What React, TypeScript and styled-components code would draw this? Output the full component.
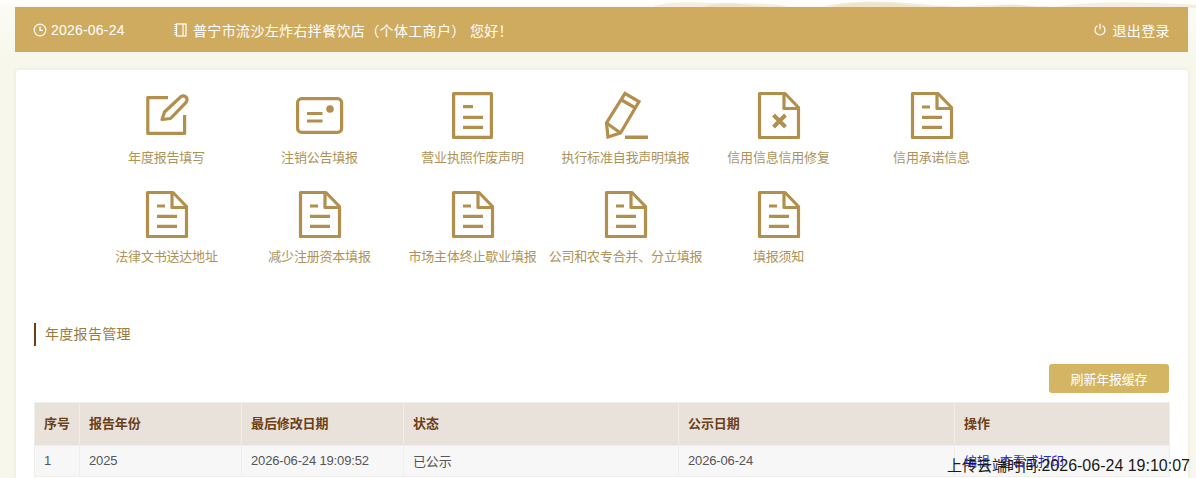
import React from "react";
import styled, { createGlobalStyle } from "styled-components";

const Global = createGlobalStyle`
  html, body { margin: 0; padding: 0; height: 100%; overflow: hidden; }
  body {
    background: linear-gradient(180deg, #ffffff 0, #fbfbf4 8px, #f8f7ec 60px);
    font-family: "Liberation Sans", "Noto Sans CJK SC", sans-serif;
  }
`;

const Page = styled.div`
  position: relative;
  width: 1196px;
  height: 478px;
  overflow: hidden;
  padding: 7px 0 0 15px;
  box-sizing: border-box;
`;

const Decor = styled.svg`
  position: absolute;
  left: 650px;
  top: 0;
  width: 546px;
  height: 8px;
`;

const TopBar = styled.header`
  position: relative;
  display: flex;
  align-items: center;
  height: 45px;
  width: 1173px;
  background: #cfab60;
  color: #fff;
  font-size: 14px;
  padding: 0 18px;
  box-sizing: border-box;
`;

const BarItem = styled.span<{ $w?: number; $right?: boolean; $track?: number; $gap?: number }>`
  display: inline-flex;
  align-items: center;
  gap: ${(p) => p.$gap ?? 5}px;
  letter-spacing: ${(p) => p.$track ?? 0}px;
  width: ${(p) => (p.$w ? `${p.$w}px` : "auto")};
  margin-left: ${(p) => (p.$right ? "auto" : 0)};
`;

const Card = styled.main`
  width: 1172px;
  height: 420px;
  margin: 18px 0 0 1px;
  background: #fff;
  border-radius: 3px;
  box-shadow: 0 0 4px rgba(120, 110, 70, 0.12);
  box-sizing: border-box;
  padding: 0 19px 0 18px;
`;

const Grid = styled.nav`
  display: grid;
  grid-template-columns: repeat(6, 153px);
  grid-auto-rows: 99px;
  height: 198px;
  padding: 21px 0 0 56px;
`;

const Tile = styled.a`
  display: flex;
  flex-direction: column;
  align-items: center;
  color: #ae9358;
  font-size: 13px;
  line-height: 18px;
  letter-spacing: -0.2px;
  white-space: nowrap;
  svg { display: block; width: 48px; height: 48px; margin-bottom: 10px; }
`;

const SectionTitle = styled.h2`
  margin: 34px 0 0;
  height: 23px;
  line-height: 23px;
  border-left: 2px solid #6b3f10;
  padding-left: 9px;
  font-size: 14px;
  letter-spacing: 0.3px;
  font-weight: normal;
  color: #9a7b3f;
`;

const Tools = styled.div`
  display: flex;
  justify-content: flex-end;
  margin-top: 18px;
`;

const RefreshBtn = styled.button`
  width: 120px;
  height: 29px;
  border: 0;
  border-radius: 3px;
  background: #d3b564;
  color: #fff;
  font: 13px "Liberation Sans", "Noto Sans CJK SC", sans-serif;
  letter-spacing: -0.2px;
`;

const Table = styled.table`
  width: 1135px;
  margin-top: 9px;
  border-collapse: collapse;
  table-layout: fixed;
  font-size: 13px;
  th, td { border: 1px solid #f0eeea; text-align: left; box-sizing: border-box; }
  th { background: #e9e2db; color: #6b4016; height: 43px; font-weight: bold; padding: 0 8px 3px 9px; letter-spacing: -0.1px; }
  td { background: #f7f7f7; color: #555; height: 31px; padding: 0 8px 2px 9px; letter-spacing: -0.15px; }
`;

const ActionLink = styled.a`
  color: #2a2acc;
  margin-right: 10px;
`;

const Stamp = styled.div`
  position: absolute;
  right: 6px;
  bottom: 3px;
  font-size: 16px;
  line-height: 18px;
  color: #1a1a1a;
  white-space: nowrap;
`;

const StampLabel = styled.span`
  font-size: 15px;
`;

const C = "#b28f4c";
const Doc = ({ children }: { children?: React.ReactNode }) => (
  <svg viewBox="0 0 48 48" fill="none" stroke={C} strokeWidth="3.2" strokeLinejoin="round">
    <path d="M4.500 2.500H30l13.500 14V46.500H4.500z" />
    <path d="M29 2.500v15h14.500" />
    {children}
  </svg>
);

const IconEdit = () => (
  <svg viewBox="0 0 48 48" fill="none" stroke={C} strokeWidth="3.2" strokeLinecap="round" strokeLinejoin="round">
    <path d="M25 6.600H4.800V42.400H41.600V24" strokeLinecap="butt" />
    <path d="M19 28.500l2.500-7.500L37 6.500c2-2 4.500-2 6-.5s1.500 4-.5 6L27.500 27.500z" />
  </svg>
);
const IconCard = () => (
  <svg viewBox="0 0 48 48" fill="none" stroke={C} strokeWidth="3.2">
    <rect x="1.600" y="7.600" width="44" height="33.800" rx="4" />
    <path d="M11 22.500h15.500M11 30h15.500" />
    <circle cx="34" cy="18" r="2.200" fill={C} stroke={C} />
  </svg>
);
const IconPaper = () => (
  <svg viewBox="0 0 48 48" fill="none" stroke={C} strokeWidth="3.2" strokeLinejoin="round">
    <rect x="4.600" y="2.600" width="37.800" height="43.800" />
    <path d="M14 15.700h10M14 26.300h20M14 36.300h20" />
  </svg>
);
const IconPencil = () => (
  <svg viewBox="0 0 48 48" fill="none" stroke={C} strokeWidth="3.2" strokeLinejoin="miter">
    <path d="M23 2.500L37 10.500 18.500 42 6 46 4.500 32z" />
    <path d="M4.500 32L18.500 42M19.500 9l14 8" />
    <path d="M23 46.300h23" strokeWidth="3.600" />
  </svg>
);
const IconDocX = () => (
  <Doc>
    <path d="M18.500 24l12 12M30.500 24l-12 12" strokeWidth="4" />
  </Doc>
);
const IconDocLines = () => (
  <Doc>
    <path d="M14 16h8M14 26.300h20M14 36.300h20" />
  </Doc>
);

const tiles = [
  { t: "年度报告填写", i: <IconEdit /> },
  { t: "注销公告填报", i: <IconCard /> },
  { t: "营业执照作废声明", i: <IconPaper /> },
  { t: "执行标准自我声明填报", i: <IconPencil /> },
  { t: "信用信息信用修复", i: <IconDocX /> },
  { t: "信用承诺信息", i: <IconDocLines /> },
  { t: "法律文书送达地址", i: <IconDocLines /> },
  { t: "减少注册资本填报", i: <IconDocLines /> },
  { t: "市场主体终止歇业填报", i: <IconDocLines /> },
  { t: "公司和农专合并、分立填报", i: <IconDocLines /> },
  { t: "填报须知", i: <IconDocLines /> },
];

export default function App() {
  return (
    <Page>
      <Global />
      <Decor viewBox="0 0 546 8" aria-hidden="true">
        <g fill="#f5eeDf">
          <path d="M0 8C10 3 30 1 60 3s60-2 85 5Z" />
          <path d="M170 8c20-8 70-8 110-3s60-5 110 3Z" />
          <path d="M400 8c30-6 80-7 146-3v3Z" />
        </g>
        <g fill="#efe3c9">
          <path d="M50 8c12-5 30-6 50-3s30 0 40 3Z" />
          <path d="M180 8c15-6 50-7 80-3s30-1 45 3Z" />
          <path d="M340 8c10-4 25-4 40-2s15-1 22 2Z" />
        </g>
      </Decor>
      <TopBar>
        <BarItem $w={141} $track={0.2} $gap={4}>
          <svg width="14" height="14" viewBox="0 0 14 14" fill="none" stroke="#fff" strokeWidth="1.200">
            <circle cx="7" cy="7" r="5.800" />
            <path d="M7 3.500V7.300H10" />
          </svg>
          2026-06-24
        </BarItem>
        <BarItem $track={0.35} $gap={6}>
          <svg width="13" height="14" viewBox="0 0 13 14" fill="none" stroke="#fff" strokeWidth="1.200">
            <rect x="2.500" y="1" width="9.500" height="12" />
            <path d="M9 1v12" />
            <path d="M1.200 1v12" strokeWidth="1.600" strokeDasharray="1 1" />
          </svg>
          普宁市流沙左炸右拌餐饮店（个体工商户） 您好！
        </BarItem>
        <BarItem $right $track={0.4}>
          <svg width="14" height="14" viewBox="0 0 14 14" fill="none" stroke="#fff" strokeWidth="1.200" strokeLinecap="round">
            <path d="M7 1v5M4 3a5 5 0 1 0 6 0" />
          </svg>
          退出登录
        </BarItem>
      </TopBar>
      <Card>
        <Grid>
          {tiles.map((r) => (
            <Tile key={r.t}>
              {r.i}
              {r.t}
            </Tile>
          ))}
        </Grid>
        <SectionTitle>年度报告管理</SectionTitle>
        <Tools>
          <RefreshBtn>刷新年报缓存</RefreshBtn>
        </Tools>
        <Table>
          <colgroup>
            <col width="45" />
            <col width="162" />
            <col width="162" />
            <col width="275" />
            <col width="276" />
            <col width="215" />
          </colgroup>
          <thead>
            <tr>
              <th>序号</th>
              <th>报告年份</th>
              <th>最后修改日期</th>
              <th>状态</th>
              <th>公示日期</th>
              <th>操作</th>
            </tr>
          </thead>
          <tbody>
            <tr>
              <td>1</td>
              <td>2025</td>
              <td>2026-06-24 19:09:52</td>
              <td>已公示</td>
              <td>2026-06-24</td>
              <td>
                <ActionLink>编辑</ActionLink>
                <ActionLink>查看或打印</ActionLink>
              </td>
            </tr>
          </tbody>
        </Table>
      </Card>
      <Stamp>
        <StampLabel>上传云端时间</StampLabel>:2026-06-24 19:10:07
      </Stamp>
    </Page>
  );
}
